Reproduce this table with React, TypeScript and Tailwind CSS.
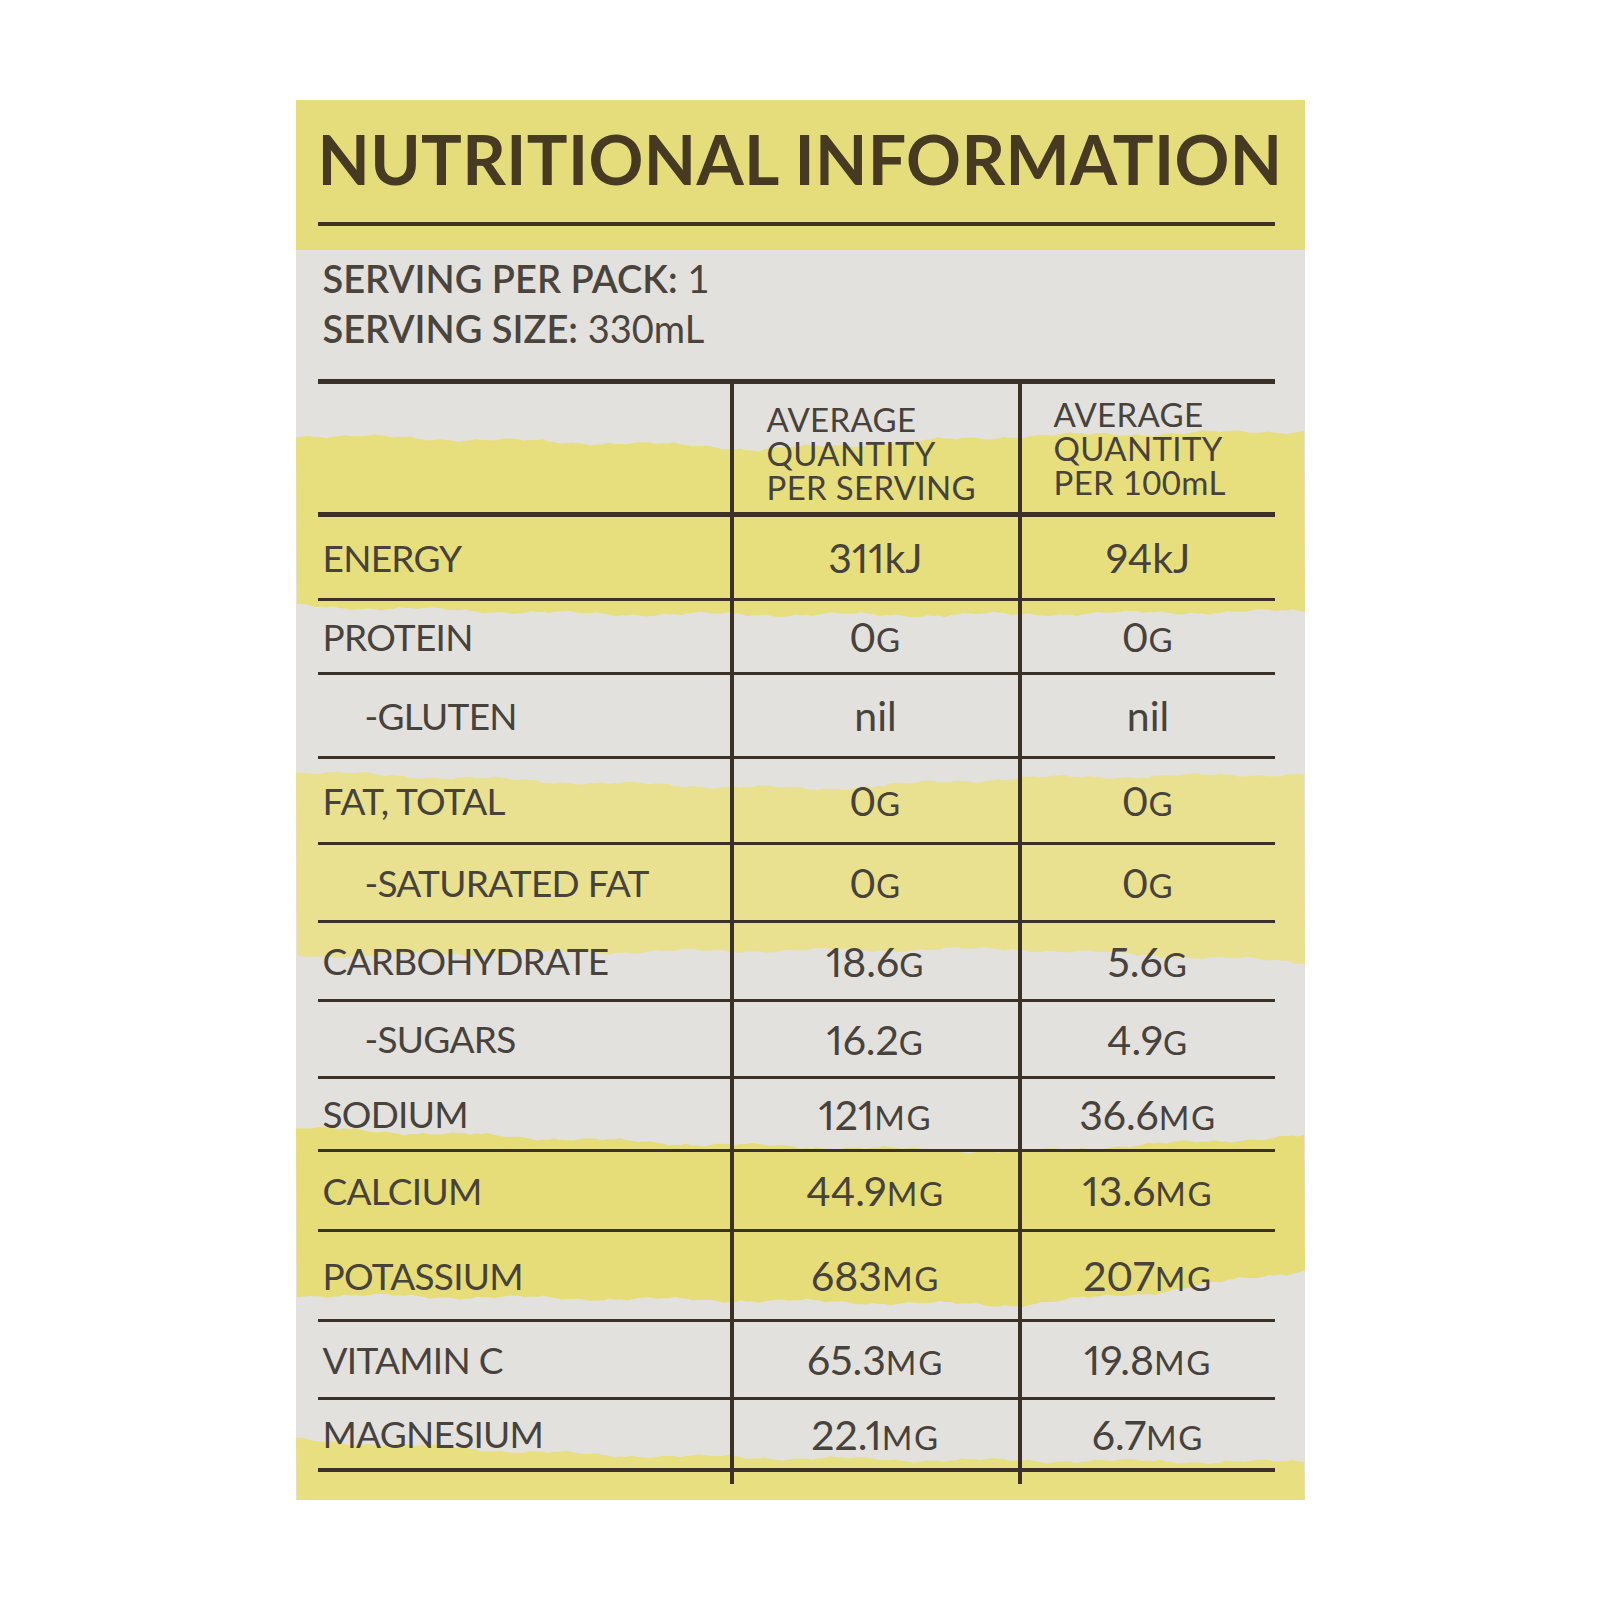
import React from 'react';

type Cell = { n: string; u?: string };

type Row = {
  label: string;
  indent?: boolean;
  serving: Cell;
  per100: Cell;
  h: string;
};

const rows: Row[] = [
  { label: 'ENERGY', serving: { n: '311kJ' }, per100: { n: '94kJ' }, h: 'h-[84px]' },
  { label: 'PROTEIN', serving: { n: '0', u: 'G' }, per100: { n: '0', u: 'G' }, h: 'h-[74px]' },
  { label: '-GLUTEN', indent: true, serving: { n: 'nil' }, per100: { n: 'nil' }, h: 'h-[84px]' },
  { label: 'FAT, TOTAL', serving: { n: '0', u: 'G' }, per100: { n: '0', u: 'G' }, h: 'h-[86px]' },
  { label: '-SATURATED FAT', indent: true, serving: { n: '0', u: 'G' }, per100: { n: '0', u: 'G' }, h: 'h-[78px]' },
  { label: 'CARBOHYDRATE', serving: { n: '18.6', u: 'G' }, per100: { n: '5.6', u: 'G' }, h: 'h-[79px]' },
  { label: '-SUGARS', indent: true, serving: { n: '16.2', u: 'G' }, per100: { n: '4.9', u: 'G' }, h: 'h-[77px]' },
  { label: 'SODIUM', serving: { n: '121', u: 'MG' }, per100: { n: '36.6', u: 'MG' }, h: 'h-[73px]' },
  { label: 'CALCIUM', serving: { n: '44.9', u: 'MG' }, per100: { n: '13.6', u: 'MG' }, h: 'h-[80px]' },
  { label: 'POTASSIUM', serving: { n: '683', u: 'MG' }, per100: { n: '207', u: 'MG' }, h: 'h-[90px]' },
  { label: 'VITAMIN C', serving: { n: '65.3', u: 'MG' }, per100: { n: '19.8', u: 'MG' }, h: 'h-[78px]' },
  { label: 'MAGNESIUM', serving: { n: '22.1', u: 'MG' }, per100: { n: '6.7', u: 'MG' }, h: 'h-[72px]' },
];

// watercolour stripes painted behind the label
const W = 1009;

function lerp(pts: [number, number][], x: number) {
  for (let i = 0; i < pts.length - 1; i++) {
    const [x0, y0] = pts[i];
    const [x1, y1] = pts[i + 1];
    if (x >= x0 && x <= x1) return y0 + ((y1 - y0) * (x - x0)) / (x1 - x0);
  }
  return pts[pts.length - 1][1];
}

function jitter(x: number, seed: number) {
  return 1.6 * Math.sin(x * 0.045 + seed) + 0.9 * Math.sin(x * 0.19 + seed * 2) + 0.5 * Math.sin(x * 0.57 + seed * 3);
}

function band(top: [number, number][], bottom: [number, number][], seed: number) {
  let d = '';
  for (let x = 0; x <= W; x += 6) {
    const y = lerp(top, x) + jitter(x, seed);
    d += (x === 0 ? 'M' : 'L') + x + ' ' + y.toFixed(1) + ' ';
  }
  for (let x = W; x >= 0; x -= 6) {
    const y = lerp(bottom, x) + jitter(x, seed + 4);
    d += 'L' + x + ' ' + y.toFixed(1) + ' ';
  }
  return d + 'Z';
}

function Stripes() {
  return (
    <svg className="absolute inset-0 w-full h-full" viewBox="0 0 1009 1400" preserveAspectRatio="none">
      <rect x="0" y="0" width="1009" height="1400" fill="#e3e1dd" />
      <rect x="0" y="0" width="1009" height="150" fill="#e5dc7b" />
      <path
        d={band([[0, 335], [420, 346], [460, 350], [720, 336], [1009, 331]], [[0, 506], [300, 514], [650, 515], [1009, 511]], 1)}
        fill="#e7de7e"
      />
      <path
        d={band([[0, 672], [300, 683], [520, 689], [720, 678], [1009, 674]], [[0, 856], [400, 851], [720, 849], [1009, 862]], 2)}
        fill="#e9e18f"
      />
      <path
        d={band([[0, 1028], [400, 1044], [720, 1052], [1009, 1036]], [[0, 1195], [420, 1200], [720, 1205], [860, 1192], [1009, 1170]], 3)}
        fill="#e6dd79"
      />
      <path
        d={band([[0, 1340], [300, 1355], [620, 1360], [1009, 1362]], [[0, 1410], [1009, 1410]], 5)}
        fill="#e8df80"
      />
    </svg>
  );
}

function Value({ c }: { c: Cell }) {
  return (
    <span className="text-[41px] leading-none proportional-nums">
      {c.n}
      {c.u && <span className="text-[33px] tracking-[0.05em]">{c.u}</span>}
    </span>
  );
}

export default function App() {
  return (
    <div className="min-h-[1600px] bg-white flex justify-center pt-[100px]">
      <div className="relative w-[1009px] h-[1400px] overflow-hidden font-['Lato',sans-serif]">
        <Stripes />
        <div className="relative flex flex-col pl-[22px] pr-[30px]">
          {/* title */}
          <h1 className="pt-[25px] text-[68px] leading-none font-bold tracking-[0.005em] text-[#463a22] whitespace-nowrap">
            NUTRITIONAL INFORMATION
          </h1>
          <div className="mt-[29px] h-[4px] bg-[#3f3423]" />

          {/* serving info */}
          <div className="mt-[27px] pl-[5px] text-[38px] leading-[50px] text-[#4a443c]">
            <div>
              <span className="font-semibold">SERVING PER PACK:</span> 1
            </div>
            <div>
              <span className="font-semibold">SERVING SIZE:</span> 330mL
            </div>
          </div>

          {/* table */}
          <div className="mt-[26px] border-t-[5px] border-[#3b3127] text-[#48423c]">
            <div className="grid grid-cols-[412px_288px_257px] h-[133px] border-b-[5px] border-[#3b3127]">
              <div />
              <div className="border-l-[4px] border-[#3b3127] pl-[33px] pt-[18px] text-[33px] leading-[34px] tracking-[0.01em]">
                AVERAGE
                <br />
                QUANTITY
                <br />
                PER SERVING
              </div>
              <div className="border-l-[4px] border-[#3b3127] pl-[32px] pt-[13px] text-[33px] leading-[34px] tracking-[0.01em]">
                AVERAGE
                <br />
                QUANTITY
                <br />
                PER 100mL
              </div>
            </div>
            {rows.map((r, i) => (
              <div
                key={r.label}
                className={
                  'grid grid-cols-[412px_288px_257px] border-[#3b3127] ' +
                  r.h +
                  (i === rows.length - 1 ? ' border-b-[4px]' : ' border-b-[3px]')
                }
              >
                <div
                  className={
                    'flex items-center text-[37px] tracking-[-0.02em] ' + (r.indent ? 'pl-[47px]' : 'pl-[5px]')
                  }
                >
                  {r.label}
                </div>
                <div className="flex items-center justify-center border-l-[4px] border-[#3b3127]">
                  <Value c={r.serving} />
                </div>
                <div className="flex items-center justify-center border-l-[4px] border-[#3b3127]">
                  <Value c={r.per100} />
                </div>
              </div>
            ))}
            <div className="grid grid-cols-[412px_288px_257px] h-[12px]">
              <div />
              <div className="border-l-[4px] border-[#3b3127]" />
              <div className="border-l-[4px] border-[#3b3127]" />
            </div>
          </div>
        </div>
      </div>
    </div>
  );
}
